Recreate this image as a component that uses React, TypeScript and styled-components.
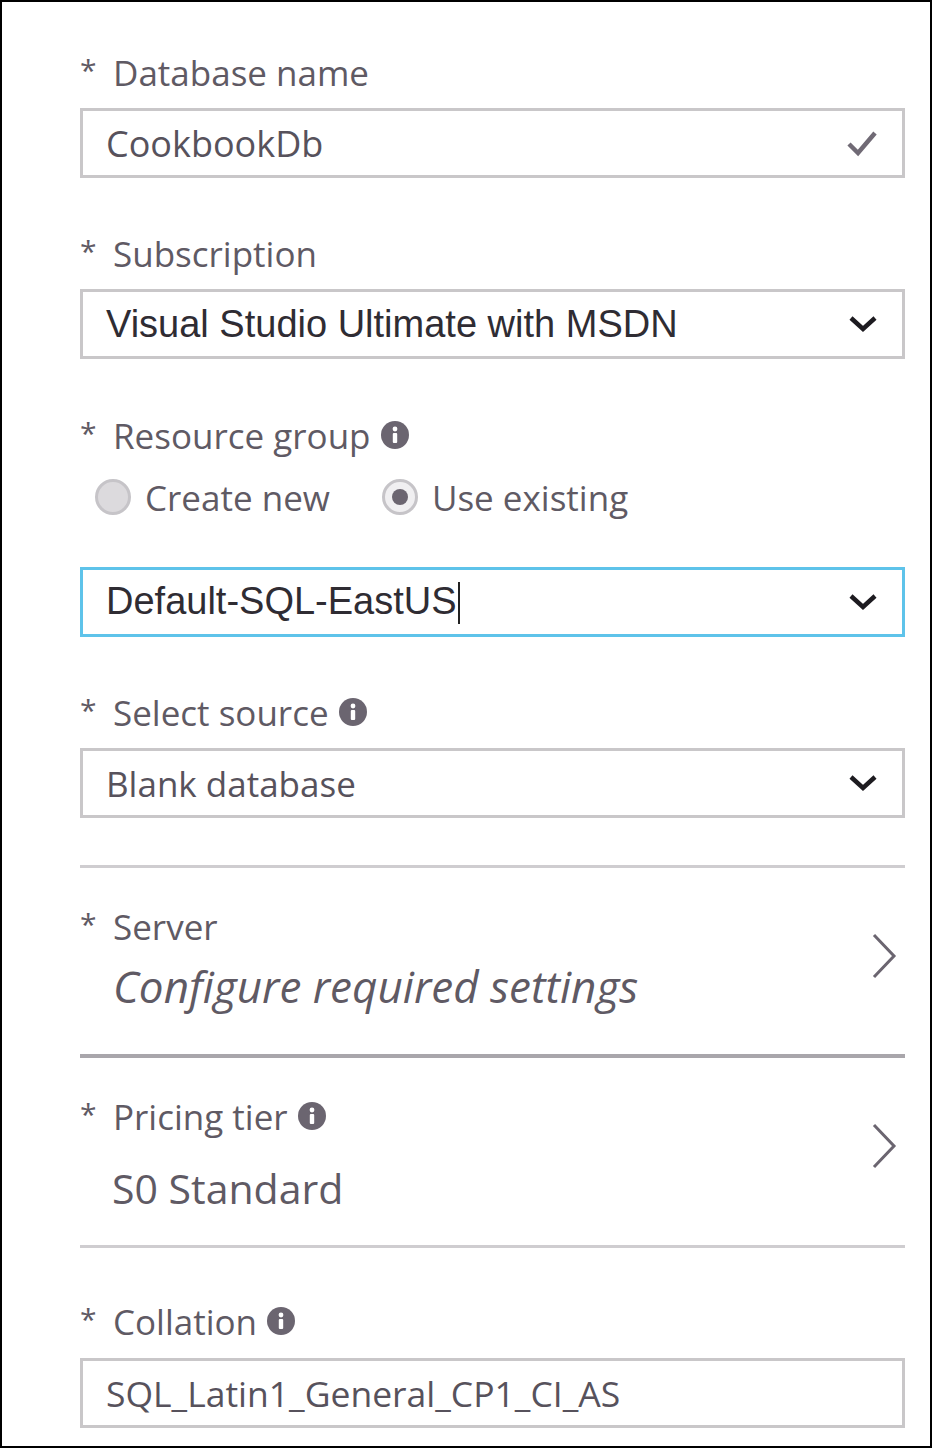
import { createGlobalStyle, styled } from "styled-components";

const Global = createGlobalStyle`
    html, body {
        margin: 0;
        padding: 0;
        background: #ffffff;
    }
`;

const Frame = styled.div`
    width: 932px;
    height: 1448px;
    box-sizing: border-box;
    border: 2px solid #000;
    padding: 50px 25px 0 78px;
    font-family: "Open Sans", "Noto Sans", sans-serif;
    color: #5f5a64;
    background: #fff;
`;

const Label = styled.div<{ $top?: number; $bottom?: number }>`
    display: flex;
    align-items: center;
    height: 40px;
    margin-top: ${(p) => p.$top ?? 0}px;
    margin-bottom: ${(p) => p.$bottom ?? 16}px;
    font-size: 35px;
    white-space: nowrap;
    svg {
        margin-left: 10px;
    }
`;

const Star = styled.span`
    width: 33px;
    font-size: 30px;
    margin-top: -6px;
`;

const Field = styled.div<{ $focus?: boolean }>`
    display: flex;
    align-items: center;
    justify-content: space-between;
    height: 70px;
    box-sizing: border-box;
    border: 3px solid ${(p) => (p.$focus ? "#5ec3ea" : "#c9c7c9")};
    padding: 0 24px 0 23px;
`;

const Value = styled.span<{ $arial?: boolean; $size?: number }>`
    font-size: ${(p) => p.$size ?? 35}px;
    font-family: ${(p) => (p.$arial ? '"Liberation Sans", Arial, sans-serif' : '"Open Sans", sans-serif')};
    color: ${(p) => (p.$arial ? "#2f2c33" : "#57525c")};
    white-space: nowrap;
`;

const Caret = styled.span`
    display: inline-block;
    width: 2px;
    height: 42px;
    background: #222;
    vertical-align: middle;
    margin-left: 1px;
`;

const Radios = styled.div`
    display: flex;
    align-items: center;
    gap: 52px;
    height: 40px;
    margin: 22px 0 50px 15px;
`;

const Radio = styled.label`
    display: flex;
    align-items: center;
    gap: 14px;
    font-size: 35px;
`;

const Dot = styled.span<{ $on?: boolean }>`
    width: 36px;
    height: 36px;
    box-sizing: border-box;
    border-radius: 50%;
    border: 3px solid #c6c4c8;
    background: ${(p) => (p.$on ? "#f0eff1" : "#dcdadd")};
    display: flex;
    align-items: center;
    justify-content: center;
    &::after {
        content: "";
        display: ${(p) => (p.$on ? "block" : "none")};
        width: 16px;
        height: 16px;
        border-radius: 50%;
        background: #6b6570;
    }
`;

const Divider = styled.hr<{ $thick?: boolean; $top: number }>`
    border: none;
    height: ${(p) => (p.$thick ? "4px" : "3px")};
    background: ${(p) => (p.$thick ? "#a9a6ab" : "#cfcdd0")};
    margin: ${(p) => p.$top}px 0 0;
`;

const Link = styled.div`
    display: flex;
    align-items: flex-start;
    justify-content: space-between;
    padding: 38px 8px 0 0;
    > svg {
        margin-top: 27px;
    }
`;

const LinkBody = styled.div`
    display: flex;
    flex-direction: column;
`;

const Sub = styled.div<{ $italic?: boolean }>`
    font-size: ${(p) => (p.$italic ? "44px" : "41px")};
    font-style: ${(p) => (p.$italic ? "italic" : "normal")};
    margin-left: ${(p) => (p.$italic ? "33px" : "32px")};
    height: 60px;
    line-height: 60px;
    white-space: nowrap;
`;

function Info() {
    return (
        <svg width="28" height="28" viewBox="0 0 28 28">
            <circle cx="14" cy="14" r="14" fill="#6b6570" />
            <circle cx="14" cy="8" r="2.4" fill="#fff" />
            <rect x="11.8" y="12" width="4.4" height="10" rx="1" fill="#fff" />
        </svg>
    );
}

function Check() {
    return (
        <svg width="32" height="28" viewBox="0 0 32 28">
            <path d="M3 15 L12 24 L29 4" fill="none" stroke="#706a75" strokeWidth="4.5" />
        </svg>
    );
}

function ChevronDown() {
    return (
        <svg width="30" height="20" viewBox="0 0 30 20">
            <path d="M3 4 L15 15 L27 4" fill="none" stroke="#1d1b20" strokeWidth="4.5" />
        </svg>
    );
}

function ChevronRight() {
    return (
        <svg width="26" height="46" viewBox="0 0 26 46">
            <path d="M3 2 L23 23 L3 44" fill="none" stroke="#6b6570" strokeWidth="3" />
        </svg>
    );
}

export default function App() {
    return (
        <Frame>
            <Global />
            <Label>
                <Star>*</Star>Database name
            </Label>
            <Field>
                <Value $size={36}>CookbookDb</Value>
                <Check />
            </Field>

            <Label $top={55}>
                <Star>*</Star>Subscription
            </Label>
            <Field>
                <Value $arial $size={38}>Visual Studio Ultimate with MSDN</Value>
                <ChevronDown />
            </Field>

            <Label $top={56}>
                <Star>*</Star>Resource group
                <Info />
            </Label>
            <Radios>
                <Radio>
                    <Dot />
                    Create new
                </Radio>
                <Radio>
                    <Dot $on />
                    Use existing
                </Radio>
            </Radios>
            <Field $focus>
                <Value $arial $size={38}>
                    Default-SQL-EastUS
                    <Caret />
                </Value>
                <ChevronDown />
            </Field>

            <Label $top={55}>
                <Star>*</Star>Select source
                <Info />
            </Label>
            <Field>
                <Value>Blank database</Value>
                <ChevronDown />
            </Field>

            <Divider $top={47} />
            <Link>
                <LinkBody>
                    <Label $bottom={10}>
                        <Star>*</Star>Server
                    </Label>
                    <Sub $italic>Configure required settings</Sub>
                </LinkBody>
                <ChevronRight />
            </Link>
            <Divider $thick $top={38} />
            <Link>
                <LinkBody>
                    <Label $bottom={22}>
                        <Star>*</Star>Pricing tier
                        <Info />
                    </Label>
                    <Sub>S0 Standard</Sub>
                </LinkBody>
                <ChevronRight />
            </Link>
            <Divider $top={27} />

            <Label $top={53} $bottom={17}>
                <Star>*</Star>Collation
                <Info />
            </Label>
            <Field>
                <Value $size={35.5}>SQL_Latin1_General_CP1_CI_AS</Value>
            </Field>
        </Frame>
    );
}
